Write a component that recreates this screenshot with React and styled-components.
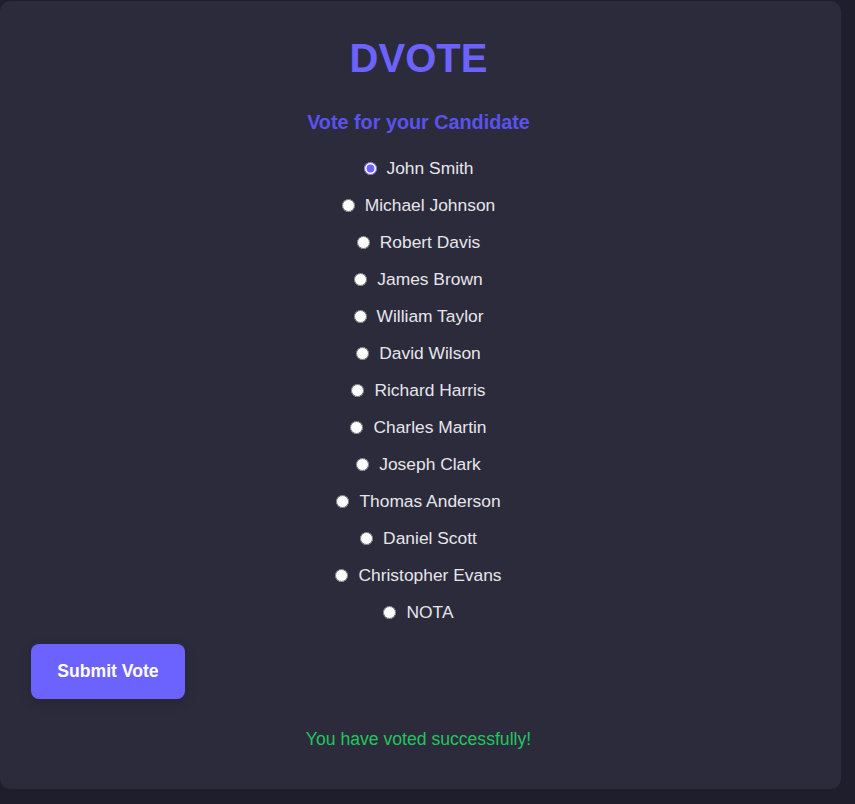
import React, { useState } from "react";
import styled, { createGlobalStyle } from "styled-components";

const GlobalStyle = createGlobalStyle`
  html, body {
    margin: 0;
    padding: 0;
    background: #1f1e2d;
  }
  body {
    font-family: "Liberation Sans", Arial, sans-serif;
  }
`;

const Page = styled.div`
  padding-top: 1px;
  min-height: 803px;
  background: #1f1e2d;
`;

const Card = styled.div`
  width: 841px;
  box-sizing: border-box;
  background: #2c2b3c;
  border-radius: 10px;
  padding: 34px 35px 39px 31px;
  display: flex;
  flex-direction: column;
`;

const Title = styled.h1`
  margin: 0;
  text-align: center;
  font-size: 40px;
  line-height: 46px;
  font-weight: 700;
  color: #6c63ff;
`;

const Subtitle = styled.h2`
  margin: 29px 0 0;
  text-align: center;
  font-size: 19.8px;
  line-height: 24px;
  font-weight: 700;
  color: #5a52ef;
`;

const List = styled.div`
  margin-top: 16px;
  display: flex;
  flex-direction: column;
  align-items: center;
`;

const Option = styled.label`
  height: 37px;
  display: flex;
  align-items: center;
  justify-content: center;
  font-size: 17.4px;
  color: #e6e6ea;
  cursor: pointer;
`;

const Radio = styled.input`
  margin: 0 10px 0 0;
  width: 13px;
  height: 13px;
  accent-color: #6c63ff;
`;

const SubmitButton = styled.button`
  align-self: flex-start;
  margin-top: 13px;
  width: 154px;
  height: 55px;
  border: none;
  border-radius: 8px;
  background: #6c63ff;
  color: #ffffff;
  font-family: "Liberation Sans", Arial, sans-serif;
  font-size: 17.6px;
  font-weight: 700;
  box-shadow: 0 4px 12px rgba(0, 0, 0, 0.15);
  cursor: pointer;
`;

const Message = styled.p`
  margin: 30px 0 0;
  text-align: center;
  font-size: 17.6px;
  line-height: 21px;
  color: #22c55e;
`;

const candidates = [
  "John Smith",
  "Michael Johnson",
  "Robert Davis",
  "James Brown",
  "William Taylor",
  "David Wilson",
  "Richard Harris",
  "Charles Martin",
  "Joseph Clark",
  "Thomas Anderson",
  "Daniel Scott",
  "Christopher Evans",
  "NOTA",
];

export default function App() {
  const [selected, setSelected] = useState("John Smith");
  return (
    <Page>
      <GlobalStyle />
      <Card>
        <Title>DVOTE</Title>
        <Subtitle>Vote for your Candidate</Subtitle>
        <List>
          {candidates.map((c) => (
            <Option key={c}>
              <Radio
                type="radio"
                name="candidate"
                value={c}
                checked={selected === c}
                onChange={() => setSelected(c)}
              />
              {c}
            </Option>
          ))}
        </List>
        <SubmitButton>Submit Vote</SubmitButton>
        <Message>You have voted successfully!</Message>
      </Card>
    </Page>
  );
}
